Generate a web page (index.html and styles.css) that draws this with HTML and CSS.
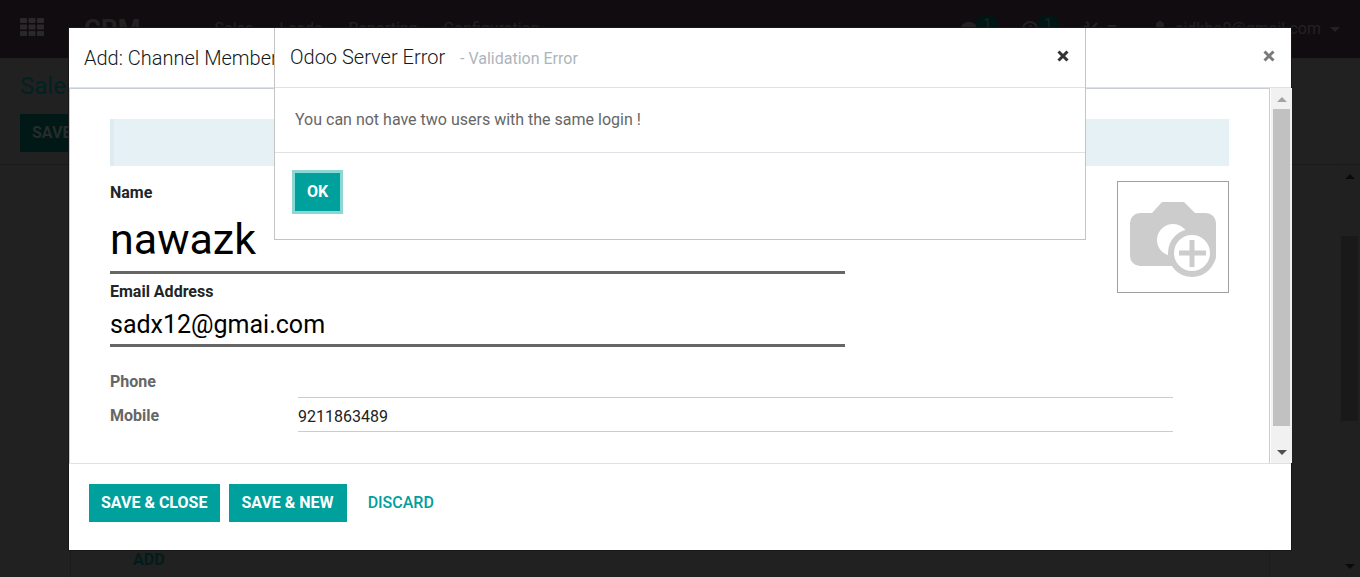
FILE: index.html
```html
<!DOCTYPE html>
<html lang="en">
<head>
<meta charset="utf-8">
<title>CRM - Sales</title>
<link rel="stylesheet" href="styles.css">
</head>
<body>
<div class="app">
  <header class="navbar">
    <button class="icon-btn apps" aria-label="Applications">
      <svg width="24" height="18" viewBox="0 0 24 18"><g fill="currentColor"><rect width="7" height="5" rx="1"/><rect x="8.500" width="7" height="5" rx="1"/><rect x="17" width="7" height="5" rx="1"/><rect y="6.500" width="7" height="5" rx="1"/><rect x="8.500" y="6.500" width="7" height="5" rx="1"/><rect x="17" y="6.500" width="7" height="5" rx="1"/><rect y="13" width="7" height="5" rx="1"/><rect x="8.500" y="13" width="7" height="5" rx="1"/><rect x="17" y="13" width="7" height="5" rx="1"/></g></svg>
    </button>
    <a class="brand" href="#">CRM</a>
    <nav class="menu">
      <a href="#">Sales</a><a href="#">Leads</a><a href="#">Reporting</a><a href="#">Configuration</a>
    </nav>
    <div class="systray">
      <button class="icon-btn tray" aria-label="Messages">
        <svg width="16" height="16" viewBox="0 0 16 16"><path fill="currentColor" d="M8 1c4.400 0 8 2.700 8 6s-3.600 6-8 6c-.8 0-1.500-.1-2.200-.3C4.500 14 3 15 1 15c.8-1 1.300-2 1.400-3.400C.9 10.400 0 8.800 0 7c0-3.300 3.600-6 8-6z"/></svg>
        <span class="badge">1</span>
      </button>
      <button class="icon-btn tray" aria-label="Activities">
        <svg width="16" height="16" viewBox="0 0 16 16"><path fill="none" stroke="currentColor" stroke-width="2" d="M8 1a7 7 0 1 0 0 14A7 7 0 0 0 8 1zM8.500 4v5H5"/></svg>
        <span class="badge">1</span>
      </button>
      <button class="icon-btn tools" aria-label="Developer tools">
        <svg width="16" height="16" viewBox="0 0 16 16"><path fill="none" stroke="currentColor" stroke-width="2.500" d="M14 2L3 14M5 6l8 8"/><path fill="none" stroke="currentColor" stroke-width="2" d="M1 5c2 2 5 1 4-3L3 1"/></svg>
        <span class="caret"></span>
      </button>
      <button class="icon-btn user">
        <svg width="12" height="16" viewBox="0 0 12 16"><path fill="currentColor" d="M6 0a4 4 0 0 1 4 4.200C10 6.500 8 9 6 9S2 6.500 2 4.200A4 4 0 0 1 6 0zM2 8c2 3 6 3 8 0 2 1 2 3 2 5 0 1-1 2-2 2H2c-1 0-2-1-2-2 0-2 0-4 2-5z"/></svg>
        <span>sidkho0@gmail.com</span><span class="caret"></span>
      </button>
    </div>
  </header>
  <section class="control-panel">
    <h1>Sales</h1>
    <button class="back-save">SAVE</button>
  </section>
  <main class="content">
    <div class="back-sheet"><button class="add">ADD</button></div>
    <div class="scrollbar back-scroll"><span class="up"></span><div class="track"><div class="thumb"></div></div><span class="down"></span></div>
  </main>
</div>

<div class="modal-layer">
  <section class="modal member" role="dialog" aria-labelledby="member-title">
    <header class="modal-header">
      <h2 id="member-title">Add: Channel Member</h2>
      <button class="close muted" aria-label="Close"><svg width="12" height="12" viewBox="0 0 12 12"><path d="M1.500 1.500l9 9m0-9l-9 9"/></svg></button>
    </header>
    <div class="modal-scroll">
      <form class="sheet" id="member-form">
        <div class="alert"></div>
        <div class="identity">
          <div class="names">
            <label for="name">Name</label>
            <input class="name" id="name" type="text" value="nawazk">
            <label for="email">Email Address</label>
            <input class="email" id="email" type="text" value="sadx12@gmai.com">
          </div>
          <button class="avatar" type="button" aria-label="Add picture">
            <svg width="86" height="76" viewBox="0 0 86 76"><path fill="#ccc" d="M32 0h22l11 11h11a10 10 0 0 1 10 10v33a10 10 0 0 1-10 10H10A10 10 0 0 1 0 54V21a10 10 0 0 1 10-10h12z"/><circle cx="43" cy="38" r="16" fill="#fff"/><circle cx="62" cy="51" r="24" fill="#ccc"/><circle cx="62" cy="51" r="18" fill="#fff"/><path stroke="#ccc" stroke-width="5" d="M62 38v27M49 51h27"/></svg>
          </button>
        </div>
        <div class="fields">
          <label for="phone">Phone</label><input id="phone" type="text">
          <label for="mobile">Mobile</label><input id="mobile" type="text" value="9211863489">
        </div>
      </form>
      <div class="scrollbar"><span class="up"></span><div class="track"><div class="thumb"></div></div><span class="down"></span></div>
    </div>
    <footer class="modal-footer">
      <button class="btn">SAVE &amp; CLOSE</button>
      <button class="btn">SAVE &amp; NEW</button>
      <button class="btn link">DISCARD</button>
    </footer>
  </section>
</div>

<div class="modal-layer">
  <section class="modal error" role="alertdialog" aria-labelledby="error-title">
    <header class="modal-header">
      <h2 id="error-title">Odoo Server Error <small>- Validation Error</small></h2>
      <button class="close" aria-label="Close"><svg width="12" height="12" viewBox="0 0 12 12"><path d="M1.500 1.500l9 9m0-9l-9 9"/></svg></button>
    </header>
    <p class="message">You can not have two users with the same login !</p>
    <footer class="error-footer"><button class="btn focused">OK</button></footer>
  </section>
</div>
</body>
</html>
```
FILE: styles.css
```css
* { box-sizing: border-box; }
body { margin: 0; font: 16px/24px Roboto, sans-serif; color: #666; background: #212121; overflow: hidden; }
button { font: inherit; border: 0; padding: 0; background: none; color: inherit; cursor: pointer; }
a { color: inherit; text-decoration: none; }
h1, h2, p { margin: 0; font-weight: 400; }
svg { display: block; }

.app { height: 100vh; display: flex; flex-direction: column; }
.navbar { display: flex; align-items: center; height: 58px; padding: 0 20px; background: #110c10; color: #222; flex: none; }
.icon-btn { display: flex; align-items: center; }
.apps { color: #292929; margin-bottom: 4px; }
.brand { margin-left: 40px; font-size: 26px; font-weight: 700; }
.menu { display: flex; gap: 26px; margin-left: 74px; }
.systray { display: flex; margin-left: auto; }
.tray { margin-right: 24px; }
.badge { min-width: 22px; margin: 0 0 10px -1px; border-radius: 11px; background: #001614; font-size: 14px; line-height: 18px; text-align: center; }
.tools { gap: 8px; margin-right: 37px; }
.user { gap: 9px; }
.caret { border: 5px solid transparent; border-top-color: #222; border-bottom: 0; }
.tools .caret { margin-bottom: 4px; }
.control-panel { height: 107px; padding: 12px 20px; border-bottom: 1px solid #1a1a1a; flex: none; }
.control-panel h1 { font-size: 24px; line-height: 32px; color: #002220; }
.back-save { margin-top: 12px; padding: 0 12px; height: 38px; background: #001816; color: #272b2b; font-weight: 700; }
.content { flex: 1; min-height: 0; display: flex; justify-content: space-between; }
.back-sheet { flex: 1; margin: 0 69px 0 70px; border: 1px solid #1c1c1c; border-width: 0 1px; display: flex; align-items: flex-end; padding: 0 62px 5px; }
.add { color: #001d1b; font-weight: 700; }

.scrollbar { width: 21px; flex: none; display: flex; flex-direction: column; align-items: center; background: #f1f1f1; padding: 9px 2px 8px; }
.scrollbar .up, .scrollbar .down { border: 5px solid transparent; }
.scrollbar .up { border-top: 0; border-bottom-color: #a3a3a3; }
.scrollbar .down { border-bottom: 0; border-top-color: #505050; }
.track { flex: 1; width: 100%; margin: 7px 0; display: flex; flex-direction: column; }
.thumb { height: 95%; background: #c1c1c1; }
.back-scroll { background: #202020; }
.back-scroll .track { justify-content: center; }
.back-scroll .thumb { height: 50%; background: #191919; margin-bottom: 86px; }
.back-scroll .up { border-bottom-color: #0a0a0a; }
.back-scroll .down { border-top-color: #0a0a0a; }

.modal-layer { position: absolute; inset: 0; padding: 28px 69px; pointer-events: none; }
.modal { background: #fff; margin: 0 auto; pointer-events: auto; }
.member { box-shadow: 0 0 0 1px #181818; }
.modal-header { display: flex; align-items: center; justify-content: space-between; height: 60px; padding: 0 16px 0 15px; border-bottom: 1px solid #dee2e6; }
.modal-header h2 { font-size: 20px; line-height: 30px; font-weight: 300; color: #14181b; }
.modal-header small { margin-left: 10px; font-size: 16px; font-weight: 400; color: #adb5bd; }
.close { padding-bottom: 3px; }
.close svg { fill: none; stroke: #333; stroke-width: 3; }
.close.muted svg { stroke: #7a7a7a; }
.modal-scroll { display: flex; margin-right: -1px; background: #fff; }
.sheet { flex: 1; margin-right: 1px; padding: 30px 40px 31px; border: 1px solid #c8ccd4; border-bottom: 0; }
.alert { height: 47px; background: #e6f1f6; border-left: 4px solid #dcecf2; }
.identity { display: flex; justify-content: space-between; align-items: flex-start; padding-top: 15px; }
.names { flex: 1; margin-right: 272px; display: flex; flex-direction: column; color: #212529; font-weight: 700; }
input { width: 100%; margin: 0; padding: 0; border: 0; border-radius: 0; background: none; outline: 0; color: #000; font: 16px Roboto, sans-serif; }
.names input { border-bottom: 3px solid #666; }
.names .name { height: 69px; padding-top: 1px; margin-bottom: 6px; font-size: 43px; }
.names .email { height: 43px; padding-top: 1px; font-size: 25px; }
.avatar { display: flex; align-items: center; justify-content: center; width: 112px; height: 112px; border: 1px solid #a0a0a0; padding-top: 6px; }
.fields { display: grid; grid-template-columns: 188px 1fr; row-gap: 4px; padding: 21px 56px 0 0; }
.fields label { font-weight: 700; line-height: 28px; height: 30px; }
.fields input { height: 30px; border-bottom: 1px solid #ccc; color: #212121; }
.modal-footer { display: flex; gap: 9px; padding: 20px 20px 28px; border-top: 1px solid #dee2e6; }
.btn { height: 38px; padding: 0 12px; background: #00a09d; color: #fff; font-weight: 700; }
.modal-footer .btn { padding: 0 13px 0 12px; }
.btn.link { background: none; color: #00a09d; font-weight: 500; }

.error { width: 812px; max-width: 100%; border: 1px solid #c4c4c4; border-top: 0; }
.message { padding: 20px; border-bottom: 1px solid #dee2e6; }
.error-footer { padding: 20px 20px 28px; }
.btn.focused { box-shadow: 0 0 0 3px #8cd6d4; }
```
